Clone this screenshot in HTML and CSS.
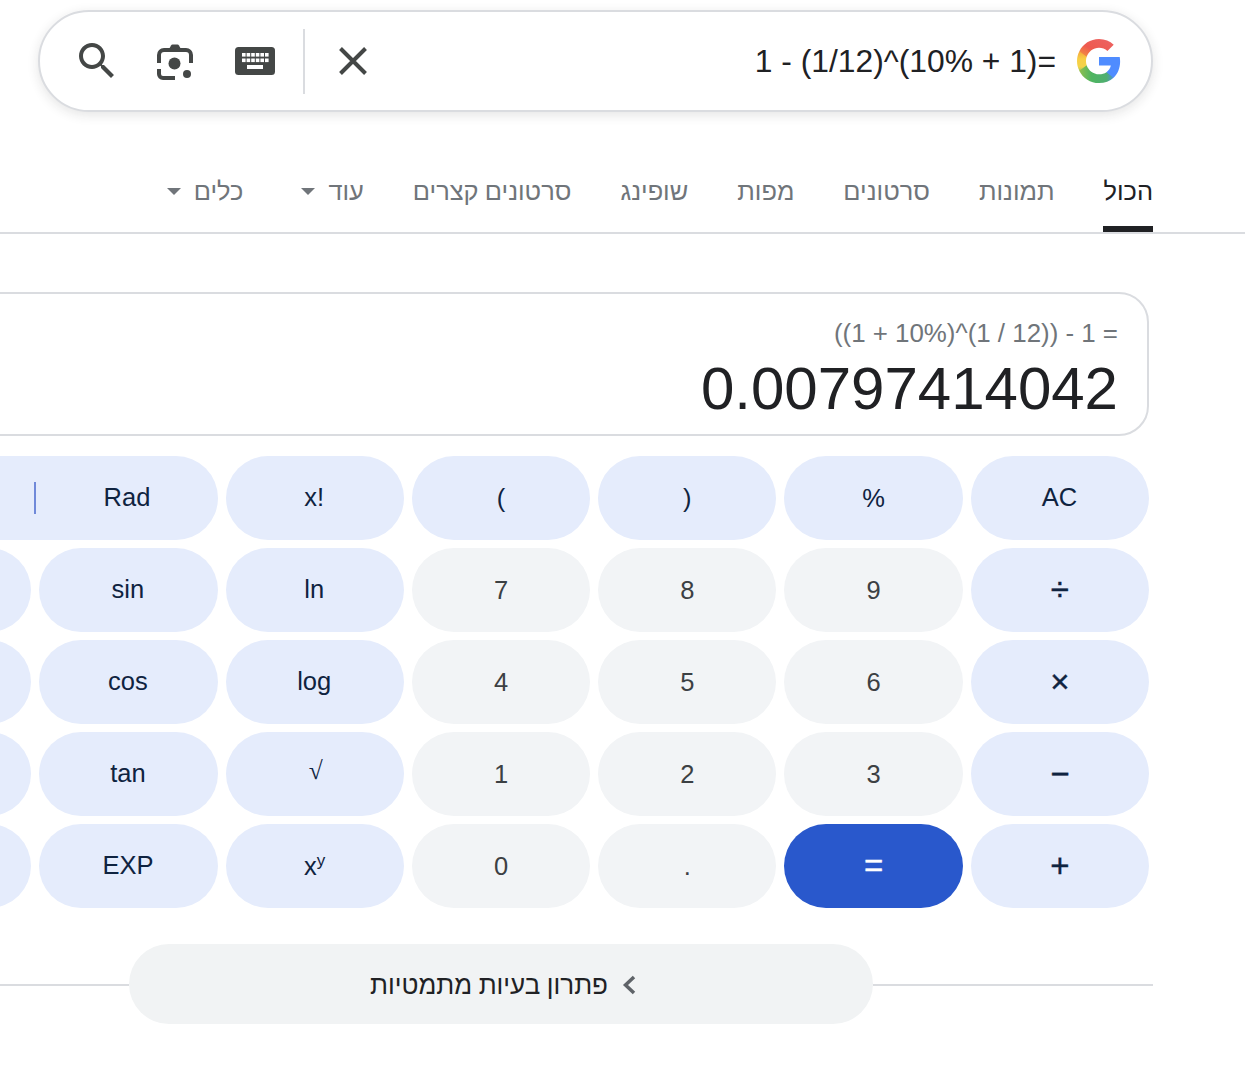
FILE: index.html
```html
<!DOCTYPE html>
<html lang="he">
<head>
    <meta charset="UTF-8">
    <meta name="viewport" content="width=device-width, initial-scale=1.0">
    <title>1 - (1/12)^(10% + 1)=</title>
    <link rel="stylesheet" href="styles.css">
</head>
<body>
    <header class="search-wrap">
        <div class="search-bar">
            <svg class="icon icon-search" viewBox="0 0 24 24"><path d="M15.5 14h-.79l-.28-.27C15.41 12.59 16 11.11 16 9.5 16 5.91 13.09 3 9.5 3S3 5.91 3 9.5 5.91 16 9.5 16c1.61 0 3.09-.59 4.23-1.57l.27.28v.79l5 4.99L20.49 19l-4.99-5zm-6 0C7.01 14 5 11.99 5 9.5S7.01 5 9.5 5 14 7.01 14 9.5 11.99 14 9.5 14z"/></svg>
            <svg class="icon icon-lens" viewBox="0 0 36 36">
                <path class="stroke" d="M2 19V11a5 5 0 0 1 5-5H29a5 5 0 0 1 5 5V19"/>
                <path class="stroke" d="M2 25v5a4 4 0 0 0 4 4H18"/>
                <path d="M11 7 14 1.5A2 2 0 0 1 15.5 0.5H20.5A2 2 0 0 1 22 1.5L25 7z"/>
                <circle cx="17.5" cy="19.5" r="6"/>
                <circle cx="30" cy="30" r="4"/>
            </svg>
            <svg class="icon icon-keyboard" viewBox="0 0 40 28">
                <rect width="40" height="28" rx="3.5"/>
                <g fill="#fff">
                    <rect x="7" y="6" width="3.6" height="3.6"/><rect x="11.6" y="6" width="3.6" height="3.6"/><rect x="16.2" y="6" width="3.6" height="3.6"/><rect x="20.8" y="6" width="3.6" height="3.6"/><rect x="25.4" y="6" width="3.6" height="3.6"/><rect x="30" y="6" width="3.6" height="3.6"/>
                    <rect x="7" y="11.5" width="3.6" height="3.6"/><rect x="11.6" y="11.5" width="3.6" height="3.6"/><rect x="16.2" y="11.5" width="3.6" height="3.6"/><rect x="20.8" y="11.5" width="3.6" height="3.6"/><rect x="25.4" y="11.5" width="3.6" height="3.6"/><rect x="30" y="11.5" width="3.6" height="3.6"/>
                    <rect x="12" y="18" width="16" height="4"/>
                </g>
            </svg>
            <span class="bar-divider"></span>
            <svg class="icon icon-close" viewBox="0 0 28 28"><path class="stroke" d="M1.5 1.5 26.5 26.5M26.5 1.5 1.5 26.5"/></svg>
            <span class="query">1 - (1/12)^(10% + 1)=</span>
            <svg class="icon-g" viewBox="0 0 24 24">
                <defs>
                    <linearGradient id="gGreen" x1="0" y1="0" x2="1" y2="0">
                        <stop offset="0" stop-color="#8fbf4f"/>
                        <stop offset="0.35" stop-color="#4fb560"/>
                        <stop offset="0.8" stop-color="#4fae72"/>
                        <stop offset="1" stop-color="#4a90d8"/>
                    </linearGradient>
                    <linearGradient id="gYellow" x1="0" y1="0" x2="0" y2="1">
                        <stop offset="0" stop-color="#f3a53c"/>
                        <stop offset="0.4" stop-color="#f8cf45"/>
                        <stop offset="0.8" stop-color="#f3d34a"/>
                        <stop offset="1" stop-color="#a9c452"/>
                    </linearGradient>
                    <linearGradient id="gRed" x1="0" y1="1" x2="1" y2="0">
                        <stop offset="0" stop-color="#f39a3e"/>
                        <stop offset="0.4" stop-color="#ee5a4f"/>
                        <stop offset="1" stop-color="#ec6464"/>
                    </linearGradient>
                </defs>
                <path fill="#4f8cff" d="M22.56 12.25c0-.78-.07-1.53-.2-2.25H12v4.26h5.92c-.26 1.37-1.04 2.53-2.21 3.31v2.77h3.57c2.08-1.92 3.28-4.74 3.28-8.09z"/>
                <path fill="url(#gGreen)" d="M12 23c2.97 0 5.46-.98 7.28-2.66l-3.57-2.77c-.98.66-2.23 1.06-3.71 1.06-2.86 0-5.29-1.93-6.16-4.53H2.18v2.84C3.99 20.53 7.7 23 12 23z"/>
                <path fill="url(#gYellow)" d="M5.84 14.09c-.22-.66-.35-1.36-.35-2.09s.13-1.43.35-2.09V7.07H2.18C1.43 8.55 1 10.22 1 12s.43 3.45 1.18 4.93l2.85-2.22.81-.62z"/>
                <path fill="url(#gRed)" d="M12 5.38c1.62 0 3.06.56 4.21 1.64l3.15-3.15C17.45 2.09 14.97 1 12 1 7.7 1 3.99 3.47 2.18 7.07l3.66 2.84c.87-2.6 3.3-4.53 6.16-4.53z"/>
            </svg>
        </div>
    </header>

    <nav class="tabs" dir="rtl">
        <a class="tab active">הכול</a>
        <a class="tab">תמונות</a>
        <a class="tab">סרטונים</a>
        <a class="tab">מפות</a>
        <a class="tab">שופינג</a>
        <a class="tab">סרטונים קצרים</a>
        <a class="tab">עוד<span class="caret"></span></a>
        <a class="tab tab-tools">כלים<span class="caret"></span></a>
    </nav>

    <main class="calc-wrap">
        <section class="calc">
            <div class="display">
                <div class="formula">((1 + 10%)^(1 / 12)) - 1 =</div>
                <div class="result">0.00797414042</div>
            </div>
            <div class="keys">
                <div class="key fn mode"><span class="mode-half"></span><span class="mode-half rad">Rad</span></div>
                <button class="key fn word">x!</button>
                <button class="key fn">(</button>
                <button class="key fn">)</button>
                <button class="key fn">%</button>
                <button class="key fn word">AC</button>

                <button class="key fn"></button>
                <button class="key fn word">sin</button>
                <button class="key fn word">ln</button>
                <button class="key num">7</button>
                <button class="key num">8</button>
                <button class="key num">9</button>
                <button class="key fn op">÷</button>

                <button class="key fn"></button>
                <button class="key fn word">cos</button>
                <button class="key fn word">log</button>
                <button class="key num">4</button>
                <button class="key num">5</button>
                <button class="key num">6</button>
                <button class="key fn op">×</button>

                <button class="key fn"></button>
                <button class="key fn word">tan</button>
                <button class="key fn root">√</button>
                <button class="key num">1</button>
                <button class="key num">2</button>
                <button class="key num">3</button>
                <button class="key fn op">−</button>

                <button class="key fn"></button>
                <button class="key fn word">EXP</button>
                <button class="key fn"><span>x<sup>y</sup></span></button>
                <button class="key num">0</button>
                <button class="key num">.</button>
                <button class="key equals op">=</button>
                <button class="key fn op">+</button>
            </div>
        </section>
    </main>

    <div class="more-row">
        <span class="more-line"></span>
        <button class="more-btn" dir="rtl">
            <svg class="chevron" viewBox="0 0 14 20"><path d="M12 2 3.5 10l8.5 8"/></svg>
            <span>פתרון בעיות מתמטיות</span>
        </button>
        <span class="more-line more-line-end"></span>
    </div>
</body>
</html>
```

FILE: styles.css
```css
body {
    margin: 0;
    height: 1091px;
    overflow: hidden;
    background: #fff;
    font-family: "Liberation Sans", Arial, sans-serif;
    color: #202124;
}

/* search box */
.search-wrap {
    padding: 10px 92px 0 38px;
}
.search-bar {
    display: flex;
    align-items: center;
    height: 102px;
    box-sizing: border-box;
    border: 2px solid #dadce0;
    border-radius: 51px;
    padding: 0 28px 0 33px;
    background: #fff;
    box-shadow: 0 3px 12px rgba(32, 33, 36, 0.12);
}
.icon {
    flex: none;
    fill: #444746;
}
.stroke {
    fill: none;
    stroke: #444746;
    stroke-width: 4;
}
.icon-search {
    width: 48px;
    height: 48px;
}
.icon-lens {
    width: 36px;
    height: 36px;
    margin-left: 36px;
    margin-top: 2px;
}
.icon-keyboard {
    width: 40px;
    height: 28px;
    margin-left: 42px;
}
.bar-divider {
    width: 2px;
    height: 65px;
    margin-left: 28px;
    background: #dadce0;
}
.icon-close {
    width: 28px;
    height: 28px;
    margin-left: 34px;
}
.query {
    margin-left: auto;
    margin-right: 19px;
    font-size: 31.8px;
    color: #202124;
    white-space: nowrap;
}
.icon-g {
    flex: none;
    width: 48px;
    height: 48px;
}

/* tabs */
.tabs {
    display: flex;
    gap: 49px;
    height: 122px;
    padding-right: 92px;
    box-sizing: border-box;
    border-bottom: 2px solid #dadce0;
    align-items: flex-end;
    font-family: "Roboto", "Liberation Sans", sans-serif;
}
.tab {
    display: flex;
    align-items: center;
    gap: 13px;
    height: 64px;
    box-sizing: border-box;
    padding-bottom: 18px;
    font-size: 25.4px;
    color: #70757a;
    white-space: nowrap;
}
.tab.active {
    color: #202124;
    border-bottom: 6px solid #202124;
    padding: 0 0 12px 1px;
    margin-left: -1px;
}
.tab-tools {
    margin-right: 9px;
}
.caret {
    width: 0;
    height: 0;
    border-left: 7px solid transparent;
    border-right: 7px solid transparent;
    border-top: 7px solid #70757a;
}

/* calculator */
.calc-wrap {
    display: flex;
    justify-content: flex-end;
    padding: 58px 96px 0 0;
}
.calc {
    flex: none;
    width: 1296px;
}
.display {
    box-sizing: border-box;
    height: 144px;
    border: 2px solid #dadce0;
    border-radius: 30px;
    padding: 24px 29px 0 0;
    text-align: right;
}
.formula {
    font-size: 25.9px;
    line-height: 30px;
    color: #70757a;
}
.result {
    font-size: 60px;
    line-height: 66px;
    margin-top: 8px;
    color: #202124;
}
.keys {
    display: grid;
    grid-template-columns: repeat(7, 1fr);
    grid-auto-rows: 84px;
    gap: 8px;
    margin-top: 20px;
}
.key {
    display: flex;
    align-items: center;
    justify-content: center;
    border: none;
    padding: 0;
    border-radius: 42px;
    font-family: inherit;
    font-size: 25.5px;
}
.fn {
    background: #e5ecfc;
    color: #0f2340;
}
.num {
    background: #f2f4f6;
    color: #3c4043;
}
.equals {
    background: #2958cc;
    color: #fff;
}
.word {
    padding: 0 1px 2px 0;
}
.op {
    font-size: 33px;
    -webkit-text-stroke: 0.4px currentColor;
}
.root {
    font-family: "Liberation Serif", serif;
    padding: 0 0 6px 2px;
}
.mode {
    grid-column: span 2;
}
.mode-half {
    flex: 1;
    text-align: center;
}
.rad {
    border-left: 2px solid #7089d9;
    height: 32px;
    line-height: 30px;
}
.key sup {
    font-size: 17px;
    line-height: 0;
}

/* solver link */
.more-row {
    display: flex;
    align-items: center;
    margin-top: 36px;
    padding-right: 92px;
}
.more-line {
    flex: 1;
    height: 2px;
    margin-top: 2px;
    background: #dadce0;
}
.more-line-end {
    flex: none;
    width: 280px;
}
.more-btn {
    display: flex;
    flex: none;
    align-items: center;
    justify-content: center;
    gap: 14px;
    width: 744px;
    height: 80px;
    padding: 2px 0 0 4px;
    border: none;
    border-radius: 40px;
    background: #f1f3f4;
    font-family: "Roboto", "Liberation Sans", sans-serif;
    font-size: 26px;
    color: #202124;
}
.chevron {
    width: 14px;
    height: 20px;
    fill: none;
    stroke: #5f6368;
    stroke-width: 3.5;
}
```
